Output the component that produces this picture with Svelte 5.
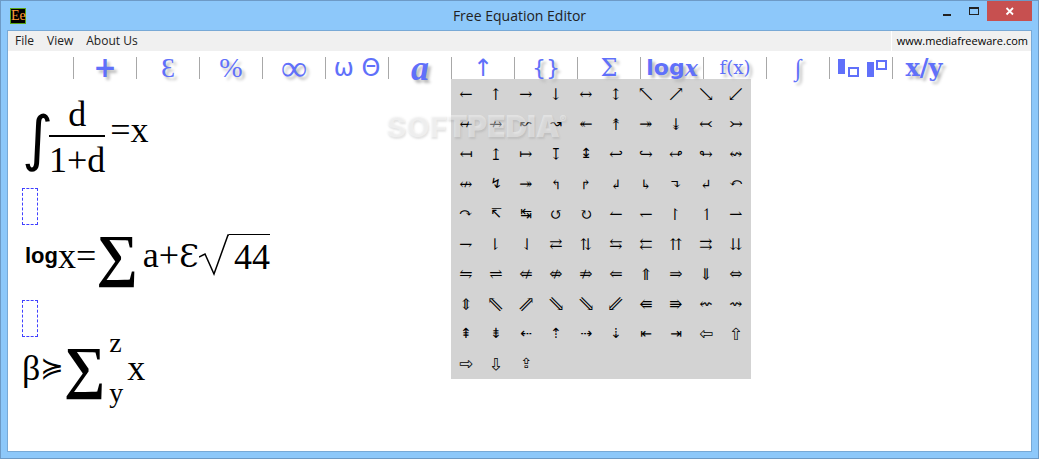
<script lang="ts">
    const menus = ['File', 'View', 'About Us'];

    // Toolbar groups, the palette hangs below the open one
    const tools = [
        { id: 'plus', label: 'Operators', glyph: '+' },
        { id: 'epsilon', label: 'Letters', glyph: 'Ɛ' },
        { id: 'percent', label: 'Symbols', glyph: '%' },
        { id: 'infinity', label: 'Infinity', glyph: '∞' },
        { id: 'greek', label: 'Greek', glyph: 'ω Θ' },
        { id: 'script', label: 'Script', glyph: 'a' },
        { id: 'arrows', label: 'Arrows', glyph: '↑' },
        { id: 'braces', label: 'Brackets', glyph: '{}' },
        { id: 'sum', label: 'Sums', glyph: 'Σ' },
        { id: 'log', label: 'Logarithms', glyph: 'log' },
        { id: 'function', label: 'Functions', glyph: 'f(x)' },
        { id: 'integral', label: 'Integrals', glyph: '∫' },
        { id: 'boxes', label: 'Scripts', glyph: '' },
        { id: 'fraction', label: 'Fractions', glyph: 'x/y' }
    ];

    const arrows = [
        ...'←↑→↓↔↕↖↗↘↙',
        ...'↚↛↜↝↞↟↠↡↢↣',
        ...'↤↥↦↧↨↩↪↫↬↭',
        ...'↮↯↠↰↱↲↳↴↵↶',
        ...'↷↸↹↺↻↼↽↾↿⇀',
        ...'⇁⇂⇃⇄⇅⇆⇇⇈⇉⇊',
        ...'⇋⇌⇍⇎⇏⇐⇑⇒⇓⇔',
        ...'⇕⇖⇗⇘⇘⇙⇚⇛⇜⇝',
        ...'⇞⇟⇠⇡⇢⇣⇤⇥⇦⇧',
        ...'⇨⇩⇪'
    ];

    let openTool = $state('arrows');

    function toggle(id: string) {
        openTool = openTool === id ? '' : id;
    }
</script>

<div class="window">
    <header class="titlebar">
        <span class="app-icon">Ee</span>
        <h1>Free Equation Editor</h1>
        <div class="window-buttons">
            <button type="button" aria-label="Minimize">
                <svg width="12" height="12" viewBox="0 0 12 12"><path d="M2 9h8v2H2z" fill="#222" /></svg>
            </button>
            <button type="button" aria-label="Maximize">
                <svg width="12" height="12" viewBox="0 0 12 12"><path d="M1 2h10v8H1zM2 4v5h8V4z" fill="#222" fill-rule="evenodd" /></svg>
            </button>
            <button type="button" class="close" aria-label="Close">
                <svg width="12" height="12" viewBox="0 0 12 12"><path d="M2.500 3l6.500 6.500M9 3l-6.500 6.500" stroke="#fff" stroke-width="1.800" /></svg>
            </button>
        </div>
    </header>

    <main class="client">
        <nav class="menubar">
            <div class="menus">
                {#each menus as menu}
                    <button type="button">{menu}</button>
                {/each}
            </div>
            <a href="#site">www.mediafreeware.com</a>
        </nav>

        <div class="toolbar">
            {#each tools as tool}
                <div class="tool">
                    <button type="button" class={tool.id} aria-label={tool.label} onclick={() => toggle(tool.id)}>
                        {#if tool.id === 'boxes'}
                            <svg width="54" height="20" viewBox="0 0 54 20">
                                <path d="M4 1h7v15H4zM33 4h7v15h-7z" fill="#6070fa" />
                                <path d="M15 10h9v8H15zM43 3h9v8H43z" fill="none" stroke="#6070fa" stroke-width="2" />
                            </svg>
                        {:else if tool.id === 'log'}
                            log<i>x</i>
                        {:else}
                            {tool.glyph}
                        {/if}
                    </button>
                    {#if tool.id === 'arrows' && openTool === 'arrows'}
                        <div class="palette">
                            {#each arrows as arrow}
                                <button type="button">{arrow}</button>
                            {/each}
                        </div>
                    {/if}
                </div>
            {/each}
        </div>

        <div class="watermark">SOFTPEDIA<sup>®</sup></div>

        <section class="document">
            <div class="equation tall">
                <span class="integral-sign">∫</span>
                <span class="frac">
                    <span class="numerator">d</span>
                    <span class="denominator">1+d</span>
                </span>
                <span class="relation">=x</span>
            </div>

            <div class="slot"></div>

            <div class="equation">
                <span class="log-name">log</span>
                <span>x=</span>
                <span class="sum-sign">∑</span>
                <span class="addend">a+<span class="epsilon-sign">Ɛ</span></span>
                <span class="root">
                    <svg width="30" height="42" viewBox="0 0 30 42">
                        <path d="M0 23l6-3 9 20L29 1h1" fill="none" stroke="#000" stroke-width="1.500" />
                    </svg>
                    <span class="radicand">44</span>
                </span>
            </div>

            <div class="slot"></div>

            <div class="equation">
                <span>β</span>
                <span class="succeeds">≽</span>
                <span class="sum-sign">∑</span>
                <span class="limits">
                    <span>z</span>
                    <span>y</span>
                </span>
                <span>x</span>
            </div>
        </section>
    </main>
</div>

<style>
    :global(body) {
        margin: 0;
    }

    .window {
        box-sizing: border-box;
        min-height: 100vh;
        display: flex;
        flex-direction: column;
        padding: 0 6px 6px;
        border: 1px solid #6d9ac6;
        background: #8dc8fa;
        font-family: "Open Sans", "Noto Sans", sans-serif;
    }

    button {
        margin: 0;
        padding: 0;
        border: 0;
        background: none;
        color: inherit;
        font: inherit;
    }

    .titlebar {
        display: grid;
        grid-template-columns: 1fr auto 1fr;
        align-items: center;
        height: 29px;
    }

    .app-icon {
        box-sizing: border-box;
        width: 16px;
        height: 16px;
        margin-left: 3px;
        border: 1px solid #5aa516;
        background: #000;
        color: #ff9c3a;
        font: 14px/13px "Liberation Serif", serif;
        text-align: center;
    }

    h1 {
        margin: 0;
        color: #222;
        font-size: 14px;
        font-weight: 400;
    }

    .window-buttons {
        display: flex;
        align-self: start;
        justify-content: flex-end;
    }

    .window-buttons button {
        display: flex;
        align-items: center;
        justify-content: center;
        width: 27px;
        height: 20px;
    }

    .window-buttons .close {
        width: 45px;
        background: #c75050;
    }

    .client {
        position: relative;
        flex: 1;
        border: 1px solid #78a9d6;
        background: #fff;
    }

    .menubar {
        display: flex;
        gap: 1px;
        font-size: 12px;
        line-height: 20px;
    }

    .menus {
        flex: 1;
        display: flex;
        gap: 13px;
        padding-left: 7px;
        background: #f0f0f0;
        color: #222;
    }

    .menubar a {
        padding: 0 3px 0 5px;
        background: #f0f0f0;
        color: #000;
        font-size: 11px;
        text-decoration: none;
    }

    .toolbar {
        display: flex;
        padding: 6px 0 0 65px;
    }

    .tool {
        position: relative;
        box-sizing: border-box;
        width: 63px;
        height: 22px;
        border-left: 1px solid #a8a8a8;
    }

    .tool > button {
        display: flex;
        align-items: center;
        justify-content: center;
        width: 100%;
        height: 100%;
        color: #6070fa;
        font: 24px/22px "DejaVu Serif", serif;
        text-shadow: 3px 3px 3px #bbb;
        white-space: nowrap;
    }

    .tool > .plus {
        font: bold 28px/22px "DejaVu Sans", sans-serif;
    }

    .tool > .epsilon,
    .tool > .percent {
        font: 28px/22px "Liberation Serif", serif;
    }

    .tool > .integral {
        font: 24px/20px "Liberation Serif", serif;
    }

    .tool > .infinity {
        font: bold 36px/22px "Liberation Serif", serif;
    }

    .tool > .greek,
    .tool > .arrows {
        font: 24px/22px "DejaVu Sans", sans-serif;
        text-shadow: none;
    }

    .tool > .script {
        font: italic bold 36px/18px "Liberation Serif", serif;
    }

    .tool > .braces {
        font: 22px/22px "DejaVu Sans", sans-serif;
    }

    .tool > .log {
        font: bold 22px/20px "DejaVu Sans", sans-serif;
    }

    .log i {
        font-family: "DejaVu Serif", serif;
    }

    .tool > .function {
        font: 18px/22px "DejaVu Serif", serif;
    }

    .tool > .fraction {
        font: bold 24px/22px "DejaVu Serif", serif;
    }

    .palette {
        position: absolute;
        top: 22px;
        left: -1px;
        display: grid;
        grid-template-columns: repeat(10, 30px);
        grid-auto-rows: 30px;
        background: #d3d3d3;
    }

    .palette button {
        color: #000;
        font: 14px/30px "DejaVu Math TeX Gyre", "DejaVu Sans", sans-serif;
    }

    .watermark {
        position: absolute;
        top: 77px;
        left: 378px;
        color: rgba(255, 255, 255, 0.4);
        font: 900 30px/36px Inter, sans-serif;
        text-shadow: 1px 2px 2px rgba(120, 120, 120, 0.2);
        pointer-events: none;
    }

    .watermark sup {
        font-size: 10px;
        vertical-align: 14px;
        line-height: 10px;
    }

    .document {
        display: flex;
        flex-direction: column;
        align-items: flex-start;
        gap: 6px;
        padding: 14px;
        color: #000;
        font: 36px/36px "Liberation Serif", serif;
    }

    .equation {
        box-sizing: border-box;
        display: flex;
        align-items: center;
        height: 63px;
        padding-bottom: 14px;
    }

    .tall {
        height: 89px;
        padding-bottom: 0;
    }

    .integral-sign {
        width: 27px;
        font: 60px/60px "DejaVu Sans", sans-serif;
    }

    .frac {
        display: grid;
        text-align: center;
    }

    .numerator {
        border-bottom: 2px solid #000;
        line-height: 42px;
    }

    .denominator {
        line-height: 46px;
    }

    .relation {
        padding: 0 0 16px 5px;
    }

    .slot {
        box-sizing: border-box;
        width: 16px;
        height: 37px;
        border: 1px dashed #4040ff;
    }

    .log-name {
        padding-left: 3px;
        font: bold 22px/36px "Liberation Sans Narrow", "Liberation Sans", sans-serif;
    }

    .sum-sign {
        font: bold 58px/60px "Liberation Serif", serif;
    }

    .addend {
        padding-left: 5px;
    }

    .epsilon-sign {
        font-family: "DejaVu Serif", serif;
        font-size: 32px;
    }

    .root {
        display: flex;
        align-items: flex-start;
    }

    .radicand {
        height: 42px;
        padding-left: 5px;
        border-top: 1px solid #000;
        line-height: 44px;
    }

    .succeeds {
        font: 28px/36px "DejaVu Sans", sans-serif;
    }

    .limits {
        display: grid;
        gap: 14px;
        padding: 0 4px;
        font-size: 28px;
    }
</style>
